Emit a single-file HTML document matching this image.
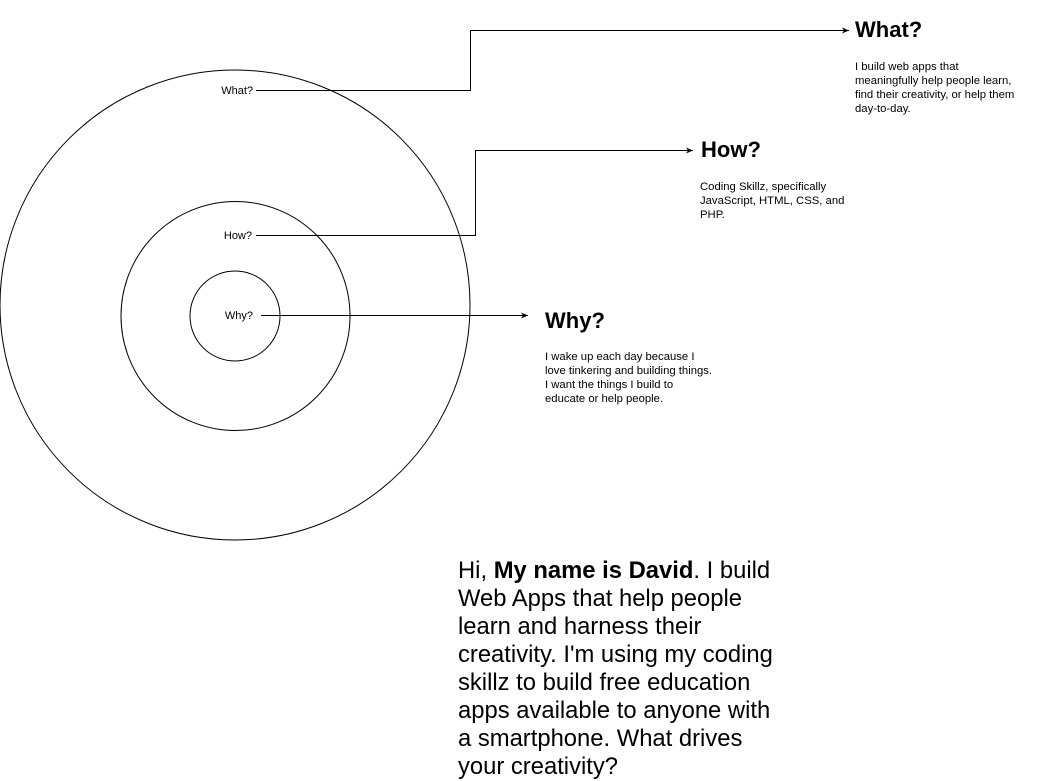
<!DOCTYPE html>
<html><head><meta charset="utf-8"><style>
body{margin:0;width:1041px;height:781px;background:#fff;position:relative;overflow:hidden;font-family:"Liberation Sans",Arial,sans-serif;color:#000}
.h{position:absolute;font-weight:bold;font-size:22px;line-height:26px}
.p{position:absolute;font-size:11.3px;line-height:14px;white-space:nowrap}
.big{position:absolute;left:458px;top:557px;width:325px;font-size:23.8px;line-height:28px}
</style></head><body>
<svg width="1041" height="781" style="position:absolute;left:0;top:0" font-family="Liberation Sans, Arial, sans-serif">
<defs><marker id="a" markerWidth="8" markerHeight="8" refX="7" refY="3" orient="auto" markerUnits="userSpaceOnUse"><path d="M0,0 L7,3 L0,6 L2,3 z" fill="#000"/></marker></defs>
<g fill="none" stroke="#000" stroke-width="1">
<circle cx="235" cy="305" r="235"/>
<circle cx="235.5" cy="316" r="114.5"/>
<circle cx="235" cy="316" r="45"/>
<path d="M256 90.5 H470.5 V30.5 H849" marker-end="url(#a)"/>
<path d="M256 235.5 H475.5 V150.5 H693" marker-end="url(#a)"/>
<path d="M261 315.5 H528" marker-end="url(#a)"/>
</g>
<g font-size="11" text-anchor="end">
<text x="253" y="94">What?</text>
<text x="252" y="239">How?</text>
<text x="253" y="319">Why?</text>
</g>
</svg>
<div class="h" style="left:855px;top:17px">What?</div>
<div class="p" style="left:855px;top:60px">I build web apps that<br>meaningfully help people learn,<br>find their creativity, or help them<br>day-to-day.</div>
<div class="h" style="left:701px;top:137px">How?</div>
<div class="p" style="left:700px;top:180px">Coding Skillz, specifically<br>JavaScript, HTML, CSS, and<br>PHP.</div>
<div class="h" style="left:545px;top:308px">Why?</div>
<div class="p" style="left:545px;top:350px">I wake up each day because I<br>love tinkering and building things.<br>I want the things I build to<br>educate or help people.</div>
<div class="big">Hi, <b>My name is David</b>. I build Web Apps that help people learn and harness their creativity. I'm using my coding skillz to build free education apps available to anyone with a smartphone. What drives your creativity?</div>
</body></html>
